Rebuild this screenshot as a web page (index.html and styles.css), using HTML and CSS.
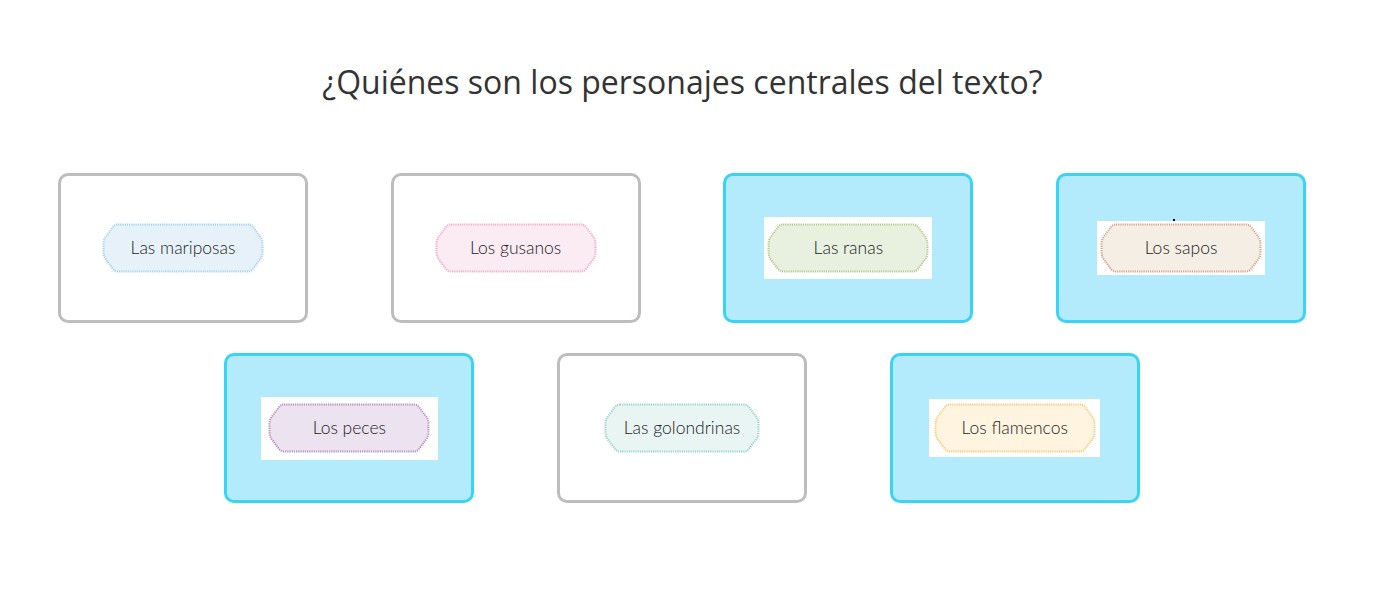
FILE: index.html
```html
<!DOCTYPE html>
<html lang="es">
<head>
    <meta charset="UTF-8">
    <meta name="viewport" content="width=device-width, initial-scale=1.0">
    <title>Personajes centrales</title>
    <link rel="stylesheet" href="styles.css">
</head>
<body>
    <div class="page">
        <h1 class="question">¿Quiénes son los personajes centrales del texto?</h1>

        <div class="options">
            <!-- Fila 1 -->
            <div class="card">
                <div class="badge badge-blue">
                    <svg viewBox="0 0 162 50"><path d="M16,1.5 H146 Q149,1.5 151,4 L158.5,14 Q160.5,17 160.5,21 V29 Q160.5,33 158.5,36 L151,46 Q149,48.5 146,48.5 H16 Q13,48.5 11,46 L3.5,36 Q1.5,33 1.5,29 V21 Q1.5,17 3.5,14 L11,4 Q13,1.5 16,1.5 Z"/></svg>
                    <span>Las mariposas</span>
                </div>
            </div>
            <div class="card">
                <div class="badge badge-pink">
                    <svg viewBox="0 0 162 50"><path d="M16,1.5 H146 Q149,1.5 151,4 L158.5,14 Q160.5,17 160.5,21 V29 Q160.5,33 158.5,36 L151,46 Q149,48.5 146,48.5 H16 Q13,48.5 11,46 L3.5,36 Q1.5,33 1.5,29 V21 Q1.5,17 3.5,14 L11,4 Q13,1.5 16,1.5 Z"/></svg>
                    <span>Los gusanos</span>
                </div>
            </div>
            <div class="card selected">
                <div class="frame frame-ranas">
                    <div class="badge badge-green">
                        <svg viewBox="0 0 162 50"><path d="M16,1.5 H146 Q149,1.5 151,4 L158.5,14 Q160.5,17 160.5,21 V29 Q160.5,33 158.5,36 L151,46 Q149,48.5 146,48.5 H16 Q13,48.5 11,46 L3.5,36 Q1.5,33 1.5,29 V21 Q1.5,17 3.5,14 L11,4 Q13,1.5 16,1.5 Z"/></svg>
                        <span>Las ranas</span>
                    </div>
                </div>
            </div>
            <div class="card selected">
                <div class="frame frame-sapos">
                    <span class="dot"></span>
                    <div class="badge badge-brown">
                        <svg viewBox="0 0 162 50"><path d="M16,1.5 H146 Q149,1.5 151,4 L158.5,14 Q160.5,17 160.5,21 V29 Q160.5,33 158.5,36 L151,46 Q149,48.5 146,48.5 H16 Q13,48.5 11,46 L3.5,36 Q1.5,33 1.5,29 V21 Q1.5,17 3.5,14 L11,4 Q13,1.5 16,1.5 Z"/></svg>
                        <span>Los sapos</span>
                    </div>
                </div>
            </div>

            <!-- Fila 2 -->
            <div class="card selected">
                <div class="frame frame-peces">
                    <div class="badge badge-purple">
                        <svg viewBox="0 0 162 50"><path d="M16,1.5 H146 Q149,1.5 151,4 L158.5,14 Q160.5,17 160.5,21 V29 Q160.5,33 158.5,36 L151,46 Q149,48.5 146,48.5 H16 Q13,48.5 11,46 L3.5,36 Q1.5,33 1.5,29 V21 Q1.5,17 3.5,14 L11,4 Q13,1.5 16,1.5 Z"/></svg>
                        <span>Los peces</span>
                    </div>
                </div>
            </div>
            <div class="card">
                <div class="badge badge-teal badge-narrow">
                    <svg viewBox="0 0 156 50"><path d="M16,1.5 H140 Q143,1.5 145,4 L152.5,14 Q154.5,17 154.5,21 V29 Q154.5,33 152.5,36 L145,46 Q143,48.5 140,48.5 H16 Q13,48.5 11,46 L3.5,36 Q1.5,33 1.5,29 V21 Q1.5,17 3.5,14 L11,4 Q13,1.5 16,1.5 Z"/></svg>
                    <span>Las golondrinas</span>
                </div>
            </div>
            <div class="card selected">
                <div class="frame frame-flamencos">
                    <div class="badge badge-orange">
                        <svg viewBox="0 0 162 50"><path d="M16,1.5 H146 Q149,1.5 151,4 L158.5,14 Q160.5,17 160.5,21 V29 Q160.5,33 158.5,36 L151,46 Q149,48.5 146,48.5 H16 Q13,48.5 11,46 L3.5,36 Q1.5,33 1.5,29 V21 Q1.5,17 3.5,14 L11,4 Q13,1.5 16,1.5 Z"/></svg>
                        <span>Los flamencos</span>
                    </div>
                </div>
            </div>
        </div>
    </div>
</body>
</html>
```

FILE: styles.css
```css
/* Base */
* {
    margin: 0;
    padding: 0;
    box-sizing: border-box;
}

body {
    font-family: 'Lato', 'Open Sans', sans-serif;
    color: #444;
    background-color: #fff;
}

.page {
    padding: 61px 9px 0 0;
}

.question {
    font-family: 'Open Sans', 'Noto Sans', sans-serif;
    font-weight: 400;
    font-size: 32px;
    line-height: 42px;
    color: #333;
    text-align: center;
    margin-right: -1px;
}

/* Opciones */
.options {
    width: 1248px;
    margin: 70px auto 0;
    display: flex;
    flex-wrap: wrap;
    justify-content: center;
    column-gap: 82.67px;
    row-gap: 30px;
}

.card {
    width: 250px;
    height: 150px;
    border: 3px solid #bdbdbd;
    border-radius: 10px;
    background: #fff;
    display: flex;
    align-items: center;
    justify-content: center;
}

.card.selected {
    background: #b3ebfd;
    border-color: #3ad3f3;
}

.frame {
    position: relative;
    background: #fff;
    display: flex;
    align-items: center;
    justify-content: center;
}

.frame-ranas {
    width: 168px;
    height: 62px;
}

.frame-sapos {
    width: 168px;
    height: 54px;
}

.frame-peces {
    width: 177px;
    height: 63px;
}

.frame-flamencos {
    width: 171px;
    height: 58px;
}

.dot {
    position: absolute;
    top: -2px;
    left: 76px;
    width: 2px;
    height: 2px;
    background: #000;
}

/* Etiquetas */
.badge {
    position: relative;
    width: 162px;
    height: 50px;
    display: flex;
    align-items: center;
    justify-content: center;
    font-size: 17.5px;
    font-weight: 300;
    color: #222;
}

.badge-narrow {
    width: 156px;
}

.badge svg {
    position: absolute;
    top: 0;
    left: 0;
    width: 100%;
    height: 100%;
}

.badge path {
    stroke-width: 2;
    stroke-dasharray: 1.2 1;
}

.badge span {
    position: relative;
    top: -1px;
}

.badge-blue path { fill: #e6f1f9; stroke: #a2d2ef; }
.badge-pink path { fill: #fbebf3; stroke: #f4aacb; }
.badge-green path { fill: #e8f0df; stroke: #b3c98c; }
.badge-brown path { fill: #f5eee4; stroke: #d4a48a; }
.badge-purple path { fill: #ebe3f0; stroke: #b98bbf; }
.badge-teal path { fill: #e8f5f3; stroke: #94d3ca; }
.badge-orange path { fill: #fff4e0; stroke: #fbc87c; }
```
